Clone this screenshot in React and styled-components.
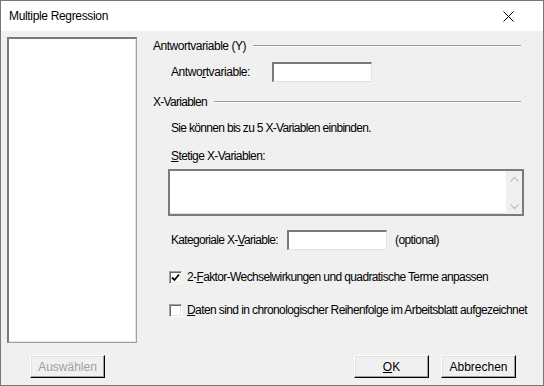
import { useLayoutEffect, useRef, useState } from "react";
import styled, { createGlobalStyle } from "styled-components";

const Global = createGlobalStyle`
  html, body {
    margin: 0;
    padding: 0;
    background: #ffffff;
  }
  body {
    font-family: "Segoe UI", "Liberation Sans", Arial, sans-serif;
    font-size: 12px;
    color: #000;
  }
`;

const Window = styled.div`
  width: 544px;
  height: 386px;
  box-sizing: border-box;
  border: 1px solid #777777;
  display: flex;
  flex-direction: column;
  background: #f0f0f0;
  overflow: hidden;
`;

const TitleBar = styled.div`
  height: 30px;
  background: #ffffff;
  display: flex;
  align-items: center;
  justify-content: space-between;
  padding: 0 0 0 8px;
`;

const CloseBox = styled.div`
  width: 46px;
  height: 30px;
  margin-right: 12px;
  display: flex;
  align-items: center;
  justify-content: center;
`;

const Body = styled.div`
  flex: 1;
  display: flex;
  padding: 6px 0 7px 6px;
`;

const LeftCol = styled.div`
  width: 130px;
  display: flex;
  flex-direction: column;
`;

const ListBox = styled.div`
  height: 306px;
  box-sizing: border-box;
  background: #fff;
  border-top: 2px solid #7a7a7a;
  border-left: 2px solid #7a7a7a;
  border-right: 1px solid #a0a0a0;
  border-bottom: 1px solid #a0a0a0;
  box-shadow: inset -1px -1px 0 #e3e3e3;
`;

const Button = styled.button`
  width: 75px;
  height: 23px;
  box-sizing: border-box;
  padding: 0;
  font-family: inherit;
  font-size: 12px;
  background: #f0f0f0;
  color: ${(p) => (p.disabled ? "#a0a0a0" : "#000")};
  border-top: 1px solid #ffffff;
  border-left: 1px solid #ffffff;
  border-right: 1px solid #000000;
  border-bottom: 1px solid #000000;
  box-shadow: inset -1px -1px 0 #a0a0a0, inset 1px 1px 0 #e3e3e3;
`;

const LeftButton = styled(Button)`
  margin: 12px 0 0 23px;
`;

const RightCol = styled.div`
  flex: 1;
  min-width: 0;
  display: flex;
  flex-direction: column;
  padding-left: 16px;
`;

const Content = styled.div`
  flex: 1;
  display: flex;
  flex-direction: column;
  padding-right: 22px;
`;

const GroupHeader = styled.div`
  display: flex;
  align-items: center;
  height: 16px;
  white-space: nowrap;
  margin-top: ${(p) => p.$mt}px;
  &::after {
    content: "";
    flex: 1;
    margin-left: 7px;
    height: 1px;
    background: #a0a0a0;
    border-bottom: 1px solid #ffffff;
  }
`;

const Row = styled.div`
  display: flex;
  align-items: center;
  padding-left: 18px;
  white-space: nowrap;
  margin-top: ${(p) => p.$mt}px;
  height: ${(p) => p.$h || 16}px;
`;

const Label = styled.span`
  width: ${(p) => p.$w}px;
  flex-shrink: 0;
  white-space: nowrap;
`;

const TextBox = styled.div`
  width: 100px;
  height: 20px;
  flex-shrink: 0;
  box-sizing: border-box;
  background: #fff;
  border-top: 2px solid #7a7a7a;
  border-left: 2px solid #7a7a7a;
  border-right: 1px solid #e3e3e3;
  border-bottom: 1px solid #e3e3e3;
`;

const MultiBox = styled.div`
  margin: 5px -3px 0 15px;
  height: 47px;
  box-sizing: border-box;
  background: #fff;
  border: 2px solid #7a7a7a;
  box-shadow: inset 0 -1px 0 #e3e3e3;
  display: flex;
  justify-content: flex-end;
`;

const ScrollBar = styled.div`
  width: 16px;
  background: #f0f0f0;
  display: flex;
  flex-direction: column;
  justify-content: space-between;
  align-items: center;
  padding: 5px 0 4px;
`;

const Optional = styled.span`
  margin-left: 8px;
`;

const CheckRow = styled.label`
  display: flex;
  align-items: center;
  padding-left: 16px;
  white-space: nowrap;
  margin-top: ${(p) => p.$mt}px;
  height: 16px;
`;

const Box = styled.span`
  width: 13px;
  height: 13px;
  flex-shrink: 0;
  box-sizing: border-box;
  background: #fff;
  border-top: 1px solid #a0a0a0;
  border-left: 1px solid #a0a0a0;
  border-right: 1px solid #ffffff;
  border-bottom: 1px solid #ffffff;
  box-shadow: inset 1px 1px 0 #696969, inset -1px -1px 0 #e3e3e3;
  margin-right: 5px;
  display: flex;
  align-items: center;
  justify-content: center;
`;

const Footer = styled.div`
  display: flex;
  justify-content: flex-end;
  gap: 12px;
  padding-right: 27px;
`;

const FitSpan = styled.span`
  display: inline-block;
  white-space: nowrap;
`;

// squeeze the text to the width it has in the original dialog font
const Fit = ({ w, children }) => {
  const ref = useRef(null);
  const [ls, setLs] = useState(0);
  useLayoutEffect(() => {
    const el = ref.current;
    el.style.letterSpacing = "0px";
    const natural = el.getBoundingClientRect().width;
    const n = el.textContent.length;
    setLs(Math.max(-1.2, Math.min(0.5, (w - natural) / n)));
  }, [w]);
  return (
    <FitSpan ref={ref} style={{ letterSpacing: `${ls}px` }}>
      {children}
    </FitSpan>
  );
};

const Chevron = ({ up }) => (
  <svg width="9" height="6" viewBox="0 0 9 6">
    <path
      d={up ? "M0.5 5.5 L4.5 1.5 L8.5 5.5" : "M0.5 0.5 L4.5 4.5 L8.5 0.5"}
      fill="none"
      stroke="#c2c2c2"
      strokeWidth="1.3"
    />
  </svg>
);

const Check = ({ checked }) => (
  <Box>
    {checked && (
      <svg width="9" height="9" viewBox="0 0 9 9">
        <path d="M1 4.5 L3.5 7 L8 1.5" fill="none" stroke="#000" strokeWidth="1.8" />
      </svg>
    )}
  </Box>
);

export default function App() {
  return (
    <>
      <Global />
      <Window>
        <TitleBar>
          <Fit w={99}>Multiple Regression</Fit>
          <CloseBox>
            <svg width="11" height="11" viewBox="0 0 11 11">
              <path d="M0.5 0.5 L10.5 10.5 M10.5 0.5 L0.5 10.5" stroke="#000" strokeWidth="1" />
            </svg>
          </CloseBox>
        </TitleBar>
        <Body>
          <LeftCol>
            <ListBox />
            <LeftButton disabled>Auswählen</LeftButton>
          </LeftCol>
          <RightCol>
            <Content>
              <GroupHeader $mt={1}>
                <Fit w={93}>Antwortvariable (Y)</Fit>
              </GroupHeader>
              <Row $mt={8} $h={20}>
                <Label $w={101}>
                  <Fit w={79}>
                    Antwo<u>r</u>tvariable:
                  </Fit>
                </Label>
                <TextBox />
              </Row>
              <GroupHeader $mt={12}>
                <Fit w={54}>X-Variablen</Fit>
              </GroupHeader>
              <Row $mt={10}>
                <Fit w={200}>Sie können bis zu 5 X-Variablen einbinden.</Fit>
              </Row>
              <Row $mt={12}>
                <Fit w={94}>
                  <u>S</u>tetige X-Variablen:
                </Fit>
              </Row>
              <MultiBox>
                <ScrollBar>
                  <Chevron up />
                  <Chevron />
                </ScrollBar>
              </MultiBox>
              <Row $mt={14} $h={20}>
                <Label $w={116}>
                  <Fit w={107}>
                    Kategoriale X-<u>V</u>ariable:
                  </Fit>
                </Label>
                <TextBox />
                <Optional>
                  <Fit w={44}>(optional)</Fit>
                </Optional>
              </Row>
              <CheckRow $mt={19}>
                <Check checked />
                <Fit w={301}>
                  2-<u>F</u>aktor-Wechselwirkungen und quadratische Terme anpassen
                </Fit>
              </CheckRow>
              <CheckRow $mt={17}>
                <Check />
                <Fit w={340}>
                  <u>D</u>aten sind in chronologischer Reihenfolge im Arbeitsblatt aufgezeichnet
                </Fit>
              </CheckRow>
            </Content>
            <Footer>
              <Button>
                <u>O</u>K
              </Button>
              <Button>Abbrechen</Button>
            </Footer>
          </RightCol>
        </Body>
      </Window>
    </>
  );
}
